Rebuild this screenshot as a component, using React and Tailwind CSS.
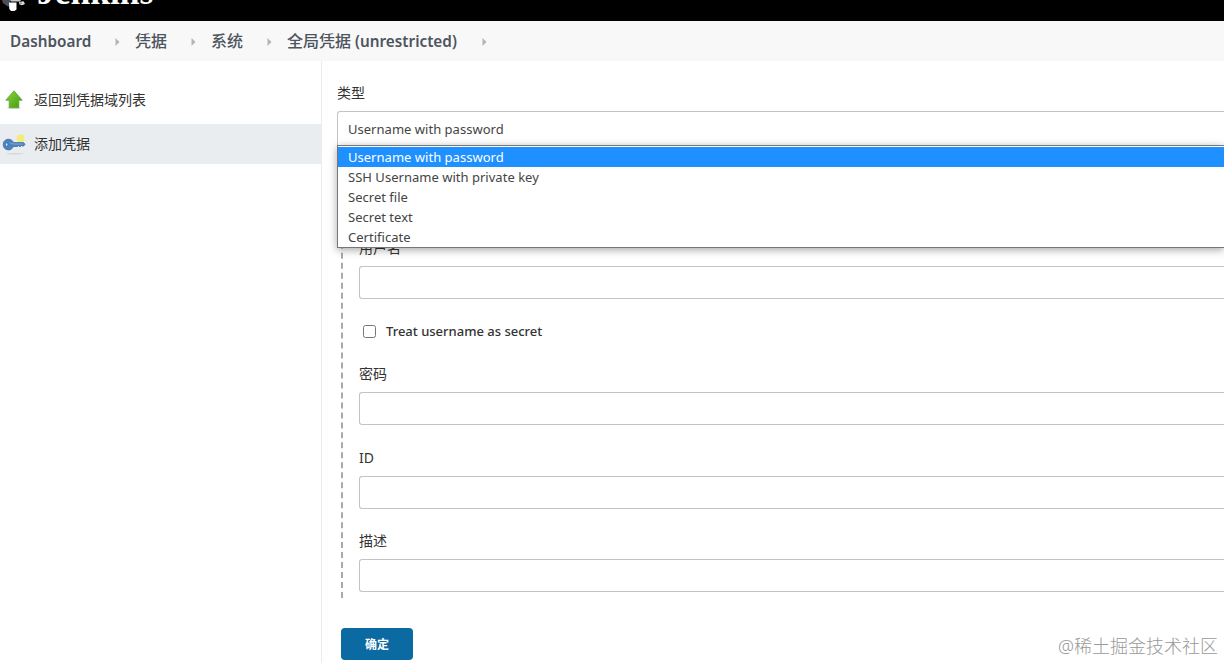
import React from 'react';

const breadcrumbs = [
  { label: 'Dashboard', className: 'w-[81px]' },
  { zh: '凭据', className: 'w-8' },
  { zh: '系统', className: 'w-8' },
  { zh: '全局凭据', label: ' (unrestricted)', className: 'w-[171px]' },
];

const credentialTypes = [
  'Username with password',
  'SSH Username with private key',
  'Secret file',
  'Secret text',
  'Certificate',
];

const UpIcon = () => (
  <svg width="20" height="20" viewBox="0 0 20 20" className="shrink-0">
    <defs>
      <linearGradient id="up" x1="0" y1="0" x2="1" y2="1">
        <stop offset="0" stopColor="#8fd43c" />
        <stop offset="1" stopColor="#3f9a12" />
      </linearGradient>
    </defs>
    <ellipse cx="10" cy="18" rx="7" ry="1" fill="#d9d9d9" />
    <path d="M10 0.8 L18.2 10.2 H14.8 V17.7 H5.2 V10.2 H1.8 Z" fill="url(#up)" stroke="#5aa52c" strokeWidth="0.8" />
  </svg>
);

const KeyIcon = () => (
  <svg width="24" height="24" viewBox="0 0 24 24" className="shrink-0">
    <ellipse cx="13" cy="21.7" rx="9" ry="0.8" fill="#d3d7da" />
    <circle cx="18.5" cy="6.3" r="4" fill="#f3ec7a" />
    <path
      d="M6.3 7.2 C9.5 7.2 10.8 9 11.4 10.6 H21.5 L23 12.3 L21.6 14 H20.3 L19.4 13.3 L18.4 14.5 H17.2 L16.4 13.6 L15.4 14.5 H11.3 C10.5 16.6 8.8 17.9 6.4 17.9 C3.2 17.9 1.2 15.5 1.2 12.5 C1.2 9.5 3.4 7.2 6.3 7.2 Z"
      fill="#4b83bc"
      stroke="#3a6da5"
      strokeWidth="0.8"
    />
    <path d="M8 10.7 C9.4 11.6 10.4 12 12 12 H21" fill="none" stroke="#82afd8" strokeWidth="0.9" />
    <ellipse cx="4.7" cy="12.6" rx="1.2" ry="1.8" fill="#dfe8f0" stroke="#2e649e" strokeWidth="0.7" />
  </svg>
);

const Logo = () => (
  <svg width="26" height="12" viewBox="0 0 26 12" className="shrink-0">
    <path d="M2 0 H10 V7 L7 6 L3 3 Z" fill="#40545f" />
    <path d="M3 0 L6 2 L5 4 Z" fill="#a5262c" />
    <path d="M9 2.5 H16.5 V9.5 L14.5 11 H11 L9.3 9 Z" fill="#fff" />
    <path d="M10 0 H21 L20 1.5 H11 Z" fill="#c9c9c9" />
    <path d="M19 2 L23.5 1.2 L25 4 L22 5.2 L19.5 4.6 Z" fill="#ddd" />
    <path d="M21 2.5 V4" stroke="#333" strokeWidth="0.8" />
  </svg>
);

const Field = ({ label, className }) => (
  <div className={className}>
    <div className="h-5 text-sm leading-5">{label}</div>
    <input type="text" className="mt-2 block h-[33px] w-full rounded-l-[3px] border border-r-0 border-[#c3c3c3] bg-white outline-none" />
  </div>
);

const App = () => {
  return (
    <div className="flex h-[663px] w-[1224px] flex-col overflow-hidden bg-white font-['Noto_Sans','Noto_Sans_CJK_SC',sans-serif] text-sm text-[#333]">
      {/* Header */}
      <header className="flex h-[21px] shrink-0 items-start overflow-hidden bg-black">
        <Logo />
        <span className="-mt-[28px] ml-[11px] font-['Liberation_Serif',serif] text-[35.5px] leading-10 font-bold text-white">Jenkins</span>
      </header>

      {/* Breadcrumbs */}
      <nav className="flex h-10 shrink-0 items-center bg-[#f8f8f8] pt-px pl-[10px] text-[#4d545d]">
        {breadcrumbs.map((item) => (
          <div key={item.className + item.zh} className="flex items-center">
            <span className={`${item.className} leading-6 whitespace-pre`}>
              {item.zh && <span className="text-base font-medium">{item.zh}</span>}
              {item.label && <span className="text-[15.3px] font-semibold">{item.label}</span>}
            </span>
            <svg width="5" height="8" viewBox="0 0 5 8" className="mr-[15px] ml-6">
              <path d="M0.5 0 L4.5 4 L0.5 8 Z" fill="#b4b4b4" />
            </svg>
          </div>
        ))}
      </nav>

      <div className="flex min-h-0 grow">
        {/* Side panel */}
        <aside className="flex w-[322px] shrink-0 flex-col gap-1 border-r border-[#ececec] pt-[19px]">
          <a className="flex h-10 items-center gap-[10px] pl-1">
            <UpIcon />
            <span>返回到凭据域列表</span>
          </a>
          <a className="flex h-10 items-center gap-2 bg-[#eaedf0] pl-[2px]">
            <KeyIcon />
            <span>添加凭据</span>
          </a>
        </aside>

        {/* Credential form */}
        <main className="flex min-w-0 grow flex-col pt-[22px] pl-[15px]">
          <div className="relative">
            <div className="h-5 leading-5">类型</div>
            <div className="mt-2 flex h-9 items-center rounded-l-[3px] border border-r-0 border-[#c3c3c3] pt-px pl-[10px] text-[#444]">
              <span className="text-[13px] tracking-[0.02px]">Username with password</span>
            </div>
            <ul className="absolute top-[62px] right-0 left-0 z-10 border border-r-0 border-[#767676] bg-white pt-px shadow-[0_2px_8px_rgba(0,0,0,0.35)]">
              {credentialTypes.map((type, index) => (
                <li
                  key={type}
                  className={`h-5 pl-[10px] text-[13px] leading-[21px] tracking-[0.02px] ${index === 0 ? 'bg-[#1e90ff] text-white' : 'text-[#444]'}`}
                >
                  {type}
                </li>
              ))}
            </ul>
          </div>

          <div className="mt-4 ml-1 h-[435px] shrink-0 border-l-2 border-dashed border-[#a9a9a9] pt-[75px] pl-4">
            <Field label="用户名" />
            <label className="mt-[22px] flex h-5 items-center">
              <input type="checkbox" className="ml-1 size-[13px]" />
              <span className="ml-[10px] text-[13px] leading-5 font-medium">Treat username as secret</span>
            </label>
            <Field label="密码" className="mt-[23px]" />
            <Field label="ID" className="mt-[23px]" />
            <Field label="描述" className="mt-[22px]" />
          </div>

          <div className="mt-[30px] flex items-center justify-between">
            <button className="ml-1 h-8 w-[72px] shrink-0 rounded bg-[#0b6aa2] pt-0.5 text-xs font-bold text-white">确定</button>
            <span className="mr-[6px] pt-1 text-lg leading-7 font-light text-[#999]">@稀土掘金技术社区</span>
          </div>
        </main>
      </div>
    </div>
  );
};

export default App;
